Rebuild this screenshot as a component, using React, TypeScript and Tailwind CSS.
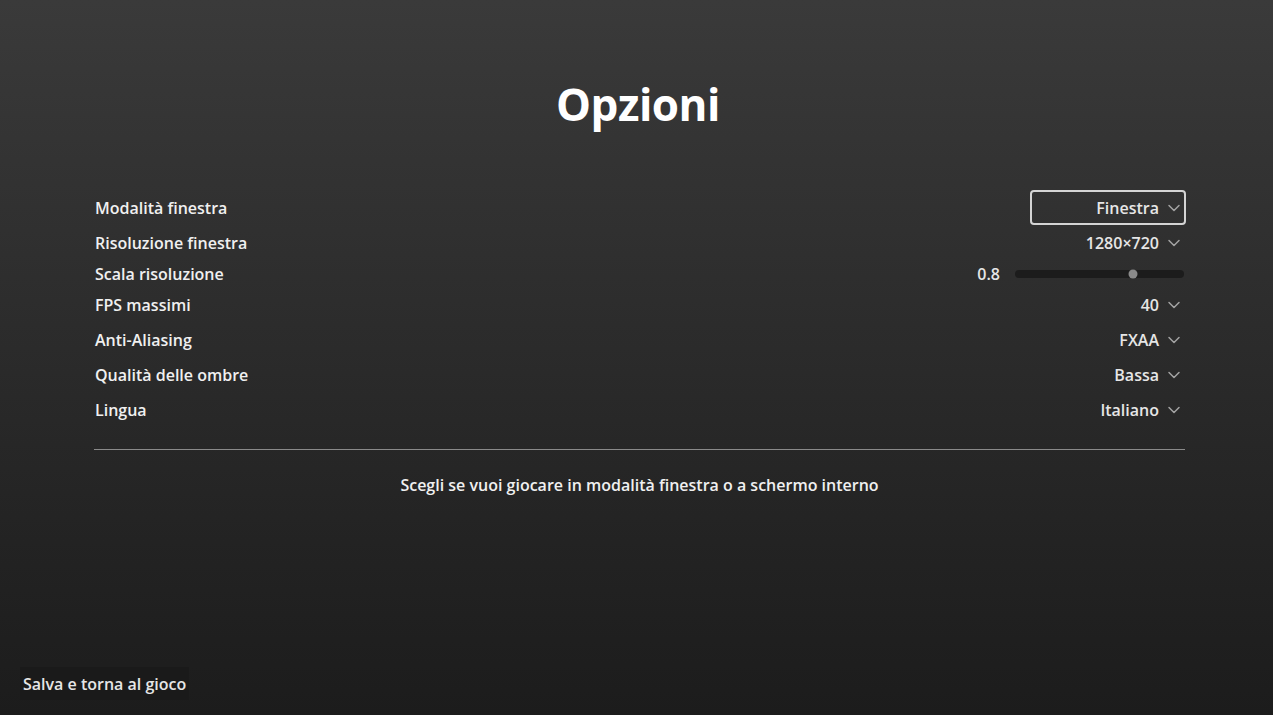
import { ChevronDown } from 'lucide-react';

type Row =
  | { label: string; kind: 'select'; value: string; active?: boolean }
  | { label: string; kind: 'slider'; value: number };

const rows: Row[] = [
  { label: 'Modalità finestra', kind: 'select', value: 'Finestra', active: true },
  { label: 'Risoluzione finestra', kind: 'select', value: '1280×720' },
  { label: 'Scala risoluzione', kind: 'slider', value: 0.8 },
  { label: 'FPS massimi', kind: 'select', value: '40' },
  { label: 'Anti-Aliasing', kind: 'select', value: 'FXAA' },
  { label: 'Qualità delle ombre', kind: 'select', value: 'Bassa' },
  { label: 'Lingua', kind: 'select', value: 'Italiano' },
];

function SelectBox({ value, active }: { value: string; active?: boolean }) {
  return (
    <div
      className={
        'flex h-[35px] w-[156px] items-center justify-end gap-[5px] rounded-[4px] border-2 ' +
        (active ? 'border-[#d4d4d4]' : 'border-transparent')
      }
    >
      <span className="text-[16px] font-semibold text-[#e6e6e6]">{value}</span>
      <ChevronDown size={20} strokeWidth={1.8} className="text-[#a3a3a3]" />
    </div>
  );
}

function Slider({ value }: { value: number }) {
  return (
    <div className="mr-[2px] flex h-[27px] items-center gap-[15px]">
      <span className="text-[16px] font-semibold text-[#e6e6e6]">{value}</span>
      <div className="relative h-[8px] w-[169px] rounded-full bg-[#1c1c1c]">
        <div
          className="absolute top-1/2 h-[9px] w-[9px] -translate-x-1/2 -translate-y-1/2 rounded-full bg-[#8a8a8a]"
          style={{ left: `${value * 100 - 10}%` }}
        />
      </div>
    </div>
  );
}

export default function App() {
  return (
    <div
      className="relative flex h-[715px] w-full flex-col bg-gradient-to-b from-[#3a3a3a] to-[#1c1c1c] text-white"
      style={{ fontFamily: '"Open Sans", "Noto Sans", sans-serif' }}
    >
      <h1 className="mt-[74px] ml-[3px] text-center text-[44px] font-bold leading-[60px] tracking-[-0.5px]">Opzioni</h1>

      <div className="mt-[56px] ml-[94px] w-[1091px]">
        <div className="w-[1092px] pl-[1px]">
          {rows.map((r) => (
            <div key={r.label} className="flex items-center justify-between">
              <span className="text-[16px] font-semibold text-[#f0f0f0]">{r.label}</span>
              {r.kind === 'select' ? (
                <SelectBox value={r.value} active={r.active} />
              ) : (
                <Slider value={r.value} />
              )}
            </div>
          ))}
        </div>
        <div className="mt-[22px] h-px bg-[#8a8a8a]" />
        <p className="mt-[23px] text-center text-[16px] font-semibold text-[#f0f0f0]">
          Scegli se vuoi giocare in modalità finestra o a schermo interno
        </p>
      </div>

      <button className="absolute bottom-[15px] left-[20px] h-[33px] bg-[#1a1a1a] px-[3px] text-[16px] font-semibold text-[#e6e6e6]">
        Salva e torna al gioco
      </button>
    </div>
  );
}
